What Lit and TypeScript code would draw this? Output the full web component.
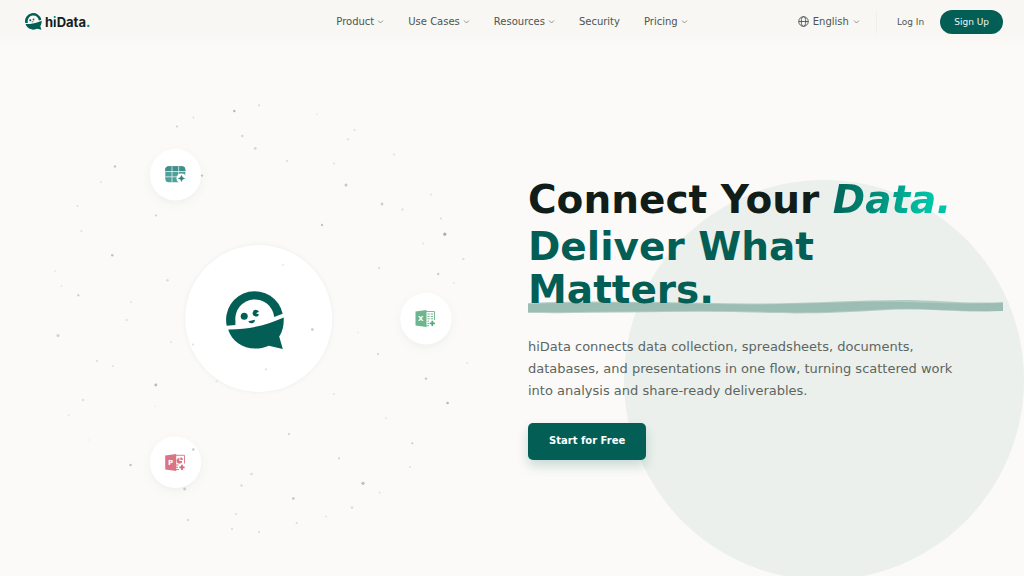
import { LitElement, html, css, svg } from "lit";
import { customElement } from "lit/decorators.js";

const brandMark = svg`
  <path fill="#035f55" d="M0.700 35 A28.500 28.500 0 0 1 56.700 23 L48.200 26.200 A19 19 0 0 0 9.400 30 V34.300 Z"/>
  <path fill="#035f55" d="M2.200 38.600 C22 38.800 40 34.600 57.700 26.600 C58 33.500 57 40 53.200 45.600 L56.800 58.300 L42.800 54.900 C25 62.500 6.500 54 2.200 38.600 Z"/>
  <circle fill="#035f55" cx="18.200" cy="25.400" r="3.500"/>
  <path fill="#035f55" d="M30.800 19.200 A3.300 3.300 0 1 0 33 23.600 L30 22.500 L33 21 A3.300 3.300 0 0 0 30.800 19.200 Z"/>
  <path fill="#035f55" d="M22.300 30.400 L29 29 A3.500 3.500 0 0 1 22.300 30.400 Z"/>`;

const chevron = html`<svg class="chevron" viewBox="0 0 7 7" aria-hidden="true">
  <path d="M1 2.500 L3.500 5 L6 2.500" fill="none" stroke="currentColor" stroke-width="0.8"/>
</svg>`;

/* x, y, radius, opacity */
const particles: number[][] = [
  [177, 126.500, 1, 0.28], [193.500, 117.500, 1, 0.18], [234.300, 111, 1.200, 0.42], [242.300, 136, 1.200, 0.24],
  [255.300, 148.500, 1.400, 0.22], [115, 166.500, 1.200, 0.32], [101, 182, 1, 0.14], [77.500, 206, 1, 0.16],
  [81.300, 231, 1, 0.18], [156, 215.500, 1, 0.28], [112.300, 255.300, 1.200, 0.36], [55, 271, 1, 0.12],
  [61.500, 286, 1, 0.12], [78.300, 295.300, 1.200, 0.24], [167.500, 280.300, 1.200, 0.2], [131, 302, 1, 0.14],
  [202, 175.600, 1.200, 0.32], [259, 105.300, 1, 0.2], [317, 114.600, 1, 0.08], [287, 161, 1, 0.2],
  [354.600, 130, 1.200, 0.13], [348, 139.300, 1.200, 0.12], [334, 163.600, 1, 0.18], [394, 154.600, 1.200, 0.12],
  [346, 185, 1.500, 0.32], [382, 204, 1.400, 0.28], [402.500, 209.500, 1.200, 0.14], [431, 194.500, 1, 0.16],
  [322, 225, 1.200, 0.34], [441, 218.500, 1, 0.2], [444.800, 234.200, 1.600, 0.48], [423.300, 243.500, 1, 0.15],
  [463.300, 259, 1.200, 0.16], [438.200, 274, 1.200, 0.28], [379, 268, 1.200, 0.16], [454, 283, 1, 0.12],
  [283, 265, 1, 0.14], [58, 335.600, 1.600, 0.24], [97, 361, 1, 0.2], [113, 366, 1, 0.14],
  [155.800, 385, 1.400, 0.4], [83, 400, 1.200, 0.16], [68.600, 415.300, 1, 0.12], [171, 342, 1, 0.14],
  [193, 344.600, 1, 0.2], [312.300, 329.500, 1.200, 0.36], [266, 369.300, 1, 0.2], [216.600, 381.300, 1, 0.14],
  [334, 394, 1, 0.16], [358.300, 332.600, 1, 0.08], [378, 354, 1.200, 0.2], [426, 378.600, 1.200, 0.34],
  [467.300, 363, 1, 0.12], [447.600, 403, 1.300, 0.42], [386, 418.300, 1, 0.14], [412.300, 443.300, 1, 0.3],
  [289, 434, 1, 0.3], [339, 458.300, 1, 0.28], [410, 467, 1, 0.14], [130.600, 465, 1.200, 0.36],
  [193.300, 449.500, 1.200, 0.34], [184.600, 489, 1.400, 0.28], [251.600, 474, 1.200, 0.2], [241.500, 485.500, 1.200, 0.2],
  [293.300, 498.500, 1.300, 0.34], [363, 483.300, 1.600, 0.38], [379.600, 492.500, 1, 0.14], [352, 507.600, 1.200, 0.22],
  [326, 516.600, 1, 0.14], [296.600, 523, 1, 0.2], [236, 514, 1, 0.18], [188, 520, 1.200, 0.2],
  [232, 529, 1.200, 0.16], [259, 532, 1, 0.2], [126.600, 320, 1, 0.2], [155.300, 406.300, 1, 0.06], [89, 440, 1, 0.06],
];

@customElement("app-root")
export class AppRoot extends LitElement {
  static styles = css`
    :host {
      display: block;
      font-family: "DejaVu Sans", sans-serif;
      color: #4c5551;
    }
    .page {
      position: relative;
      display: flex;
      flex-direction: column;
      min-height: 100vh;
      overflow: hidden;
      background: #fbfaf8;
    }
    .blob {
      position: absolute;
      right: 0;
      bottom: -4px;
      width: 400px;
      aspect-ratio: 1;
      border-radius: 50%;
      background: #ebf0ec;
    }
    header {
      position: relative;
      display: grid;
      grid-template-columns: 1fr auto 1fr;
      align-items: center;
      height: 43px;
      padding: 0 21px;
      box-sizing: border-box;
      background: linear-gradient(#f8f7f3 85%, #faf9f6);
      font-size: 10px;
      line-height: 16px;
    }
    a,
    button {
      font: inherit;
      color: inherit;
      text-decoration: none;
      background: none;
      border: 0;
      padding: 0;
      margin: 0;
      cursor: pointer;
    }
    .logo {
      display: flex;
      align-items: center;
      gap: 3px;
      justify-self: start;
      padding-left: 4px;
      font-family: Inter, sans-serif;
      font-weight: 700;
      font-size: 13px;
      color: #14201c;
    }
    .logo-mark {
      width: 17px;
      height: 17px;
    }
    .logo-i {
      background: linear-gradient(#008f7d 35%, #14201c 35%);
      -webkit-background-clip: text;
      background-clip: text;
      color: transparent;
    }
    .logo-dot {
      color: #008f7d;
    }
    nav {
      display: flex;
      align-items: center;
      gap: 24px;
    }
    .item {
      display: flex;
      align-items: center;
      gap: 3px;
    }
    .chevron {
      width: 7px;
      height: 7px;
      opacity: 0.75;
    }
    .actions {
      display: flex;
      align-items: center;
      justify-self: end;
      gap: 16px;
    }
    .language {
      gap: 4px;
    }
    .globe {
      width: 11px;
      height: 11px;
    }
    .account {
      display: flex;
      align-items: center;
      gap: 16px;
      padding-left: 20px;
      border-left: 1px solid #efeee9;
      height: 22px;
      font-size: 9px;
    }
    .signup {
      background: #035f55;
      color: #eef6f3;
      border-radius: 12px;
      height: 24px;
      padding: 0 14px;
    }
    main {
      position: relative;
      flex: 1;
      display: grid;
      grid-template-columns: 1fr 1fr;
      align-items: center;
      gap: 32px;
      padding: 18px 21px 0;
    }
    .orbit {
      display: block;
      width: 100%;
      overflow: visible;
    }
    .hub {
      filter: drop-shadow(0 0 2px rgba(3, 60, 50, 0.07));
    }
    .satellite {
      filter: drop-shadow(0 3px 4px rgba(3, 60, 50, 0.05));
    }
    .particles {
      opacity: 0.8;
    }
    .letter {
      font: bold 7px "DejaVu Sans", sans-serif;
      fill: #fff;
    }
    h1 {
      margin: 0;
      font-size: 39px;
      line-height: 43px;
      font-weight: bold;
      color: #101d19;
    }
    .data {
      background: linear-gradient(100deg, #006b5f 10%, #00c4a7 80%);
      -webkit-background-clip: text;
      background-clip: text;
      color: transparent;
    }
    .promise {
      display: block;
      position: relative;
      margin-top: 4px;
      color: #035f55;
    }
    .words {
      position: relative;
    }
    .brush {
      position: absolute;
      left: 0;
      bottom: -3px;
      width: 100%;
      height: 14px;
    }
    p {
      margin: 25px 0 21px;
      max-width: 448px;
      font-size: 13px;
      line-height: 22px;
      color: #5d6662;
    }
    .cta {
      display: inline-block;
      padding: 10px 21px 11px;
      border-radius: 5px;
      background: #035f55;
      color: #fff;
      font-size: 10px;
      line-height: 16px;
      font-weight: bold;
      box-shadow: 0 6px 12px rgba(3, 95, 85, 0.2);
    }
  `;

  private menu(label: string) {
    return html`<button class="item" type="button">${label}${chevron}</button>`;
  }

  render() {
    return html`
      <div class="page">
        <div class="blob"></div>
        <header>
          <a class="logo" href="#">
            <svg class="logo-mark" viewBox="0 0 59 59" aria-hidden="true">${brandMark}</svg>
            <span>h<span class="logo-i">i</span>Data<span class="logo-dot">.</span></span>
          </a>
          <nav>
            ${this.menu("Product")} ${this.menu("Use Cases")} ${this.menu("Resources")}
            <a href="#security">Security</a>
            ${this.menu("Pricing")}
          </nav>
          <div class="actions">
            <button class="item language" type="button">
              <svg class="globe" viewBox="0 0 11 11" fill="none" stroke="currentColor" stroke-width="0.9" aria-hidden="true">
                <circle cx="5.500" cy="5.500" r="4.800"/>
                <ellipse cx="5.500" cy="5.500" rx="2.200" ry="4.800"/>
                <path d="M0.700 5.500 H10.300"/>
              </svg>
              English${chevron}
            </button>
            <div class="account">
              <a href="#login">Log In</a>
              <button class="signup" type="button">Sign Up</button>
            </div>
          </div>
        </header>
        <main>
          <svg class="orbit" viewBox="21 81 475 475" aria-hidden="true">
            <circle class="hub" cx="258.700" cy="318.500" r="73.500" fill="#fff"/>
            <g class="satellite" fill="#fff">
              <circle cx="175.500" cy="174.800" r="25.700"/>
              <circle cx="426" cy="318.800" r="25.700"/>
              <circle cx="175.500" cy="462.300" r="25.700"/>
            </g>
            <g transform="translate(226 290.800)">${brandMark}</g>

            <g>
              <rect x="165.300" y="166.300" width="20" height="16" rx="3.500" fill="#4f9f9b"/>
              <path d="M165.300 171.300 V169.800 A3.500 3.500 0 0 1 168.800 166.300 H181.800 A3.500 3.500 0 0 1 185.300 169.800 V171.300 Z" fill="#438e8b"/>
              <path d="M165.300 171.500 H185.300 M165.300 176.800 H185.300 M172 166.300 V182.300 M178.700 166.300 V182.300" stroke="#e4f3f1" stroke-width="0.8"/>
              <circle cx="181.500" cy="178.400" r="5" fill="#fff"/>
              <path d="M181.500 174.800 L182.700 177.200 L185.100 178.400 L182.700 179.600 L181.500 182 L180.300 179.600 L177.900 178.400 L180.300 177.200 Z" fill="#2f8580"/>
            </g>

            <g>
              <path d="M426 311.500 H434.500 V320 M426 325.800 H429" fill="none" stroke="#6db58b" stroke-width="0.9"/>
              <path d="M427.500 314 H429.700 M430.700 314 H433 M427.500 316.400 H429.700 M430.700 316.400 H433 M427.500 318.800 H429.700 M430.700 318.800 H433 M427.500 321.200 H429 M427.500 323.500 H429" stroke="#6db58b" stroke-width="1"/>
              <path d="M415.500 311.500 L426.500 310 V327 L415.500 325.500 Z" fill="#6db58b"/>
              <text class="letter" x="418" y="321">X</text>
              <path d="M432.300 320.800 V326 M429.700 323.400 H434.900" stroke="#55a77a" stroke-width="1.700"/>
            </g>

            <g>
              <path d="M176 455.300 H184.500 V463.500 M176 469.500 H179" fill="none" stroke="#dc7385" stroke-width="0.9"/>
              <path d="M179.400 458 V461 H182.200 A2.800 2.800 0 1 1 179.400 458 Z" fill="#dc7385"/>
              <path d="M180.300 457.200 A2.800 2.800 0 0 1 182.900 460 H180.300 Z" fill="#dc7385"/>
              <path d="M176 465 H178.500 M176 467.300 H178" stroke="#dc7385" stroke-width="1"/>
              <path d="M165.200 455.500 L176.200 454 V471 L165.200 469.500 Z" fill="#dc7385"/>
              <text class="letter" x="168" y="465">P</text>
              <path d="M182 464.700 V469.900 M179.400 467.300 H184.600" stroke="#d9647a" stroke-width="1.700"/>
            </g>

            <g class="particles">
              ${particles.map(
                ([x, y, r, o]) => svg`<circle cx=${x} cy=${y} r=${r} fill="#333" fill-opacity=${o}/>`
              )}
            </g>
          </svg>
          <section>
            <h1>
              Connect Your <em class="data">Data.</em>
              <span class="promise">
                <svg class="brush" viewBox="0 0 475 14" preserveAspectRatio="none" aria-hidden="true">
                  <path fill="#9bbdb4" fill-opacity="0.7" d="M0 3 C60 0 120 2 185 3 C260 5 320 0 372 0 C410 0 440 4 475 2 V11 C430 13 400 8 360 10 C310 13 280 14 240 13 C160 10 80 14 0 13 Z"/>
                  <path fill="#9bbdb4" d="M0 4 C60 2 120 3 185 4 C260 6 320 1 372 2 C410 3 440 4 475 3 V11 C430 12 400 8 360 9 C310 12 280 13 240 12 C160 9 80 13 0 12 Z"/>
                </svg>
                <span class="words">Deliver What Matters.</span>
              </span>
            </h1>
            <p>
              hiData connects data collection, spreadsheets, documents, databases, and presentations in
              one flow, turning scattered work into analysis and share-ready deliverables.
            </p>
            <a class="cta" href="#start">Start for Free</a>
          </section>
        </main>
      </div>
    `;
  }
}
